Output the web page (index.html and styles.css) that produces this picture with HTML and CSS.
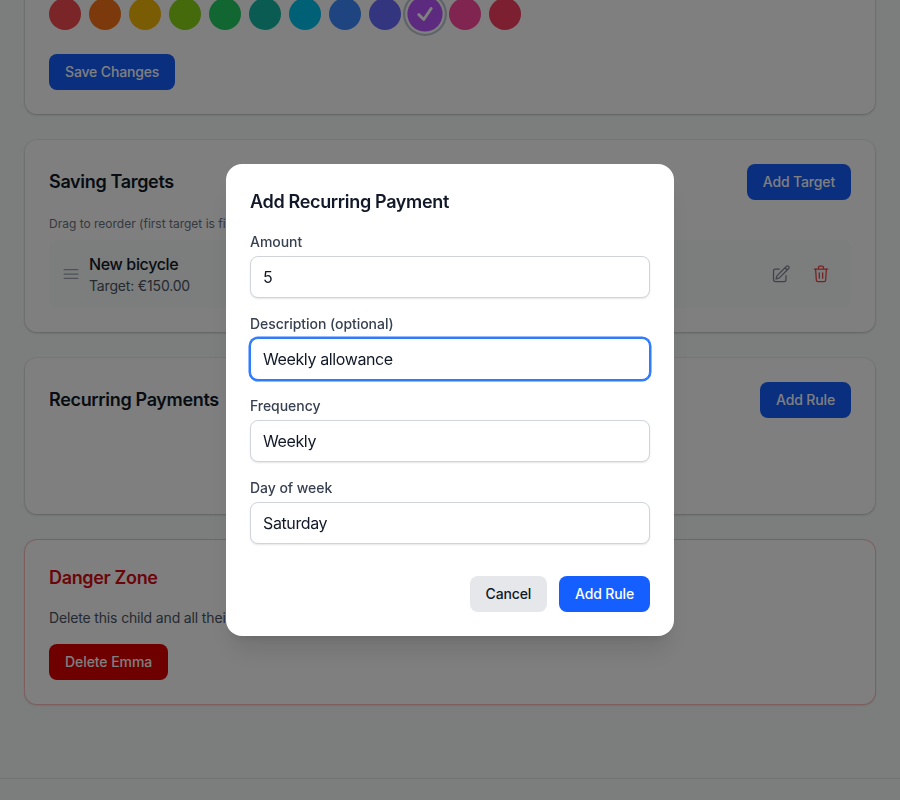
FILE: index.html
```html
<!DOCTYPE html>
<html lang="en">
<head>
<meta charset="utf-8">
<title>Edit child</title>
<link rel="stylesheet" href="styles.css">
</head>
<body>
<main class="content">
  <section class="card">
    <div class="swatches">
      <span class="swatch c-red"></span>
      <span class="swatch c-orange"></span>
      <span class="swatch c-yellow"></span>
      <span class="swatch c-lime"></span>
      <span class="swatch c-green"></span>
      <span class="swatch c-teal"></span>
      <span class="swatch c-cyan"></span>
      <span class="swatch c-blue"></span>
      <span class="swatch c-indigo"></span>
      <span class="swatch c-purple selected">
        <svg class="check" viewBox="0 0 24 24" fill="none" stroke="currentColor" stroke-width="3.500" stroke-linecap="round" stroke-linejoin="round"><path d="M4.500 12.750l6 6 9-13.500"/></svg>
      </span>
      <span class="swatch c-pink"></span>
      <span class="swatch c-rose"></span>
    </div>
    <button class="btn primary" type="button">Save Changes</button>
  </section>

  <section class="card">
    <div class="card-head">
      <h2>Saving Targets</h2>
      <button class="btn primary" type="button">Add Target</button>
    </div>
    <p class="hint">Drag to reorder (first target is filled first)</p>
    <div class="target">
      <svg class="icon handle" viewBox="0 0 24 24" fill="none" stroke="currentColor" stroke-width="1.5" stroke-linecap="round"><path d="M3.75 6.75h16.5M3.75 12h16.5M3.75 17.25h16.5"/></svg>
      <div class="target-info">
        <div class="target-name">New bicycle</div>
        <div class="target-amount">Target: €150.00</div>
      </div>
      <div class="target-actions">
        <svg class="icon edit" viewBox="0 0 24 24" fill="none" stroke="currentColor" stroke-width="1.5" stroke-linecap="round" stroke-linejoin="round"><path d="M16.862 4.487l1.687-1.688a1.875 1.875 0 112.652 2.652L10.582 16.07a4.5 4.5 0 01-1.897 1.13L6 18l.8-2.685a4.5 4.5 0 011.13-1.897l8.932-8.931zm0 0L19.5 7.125M18 14v4.75A2.25 2.25 0 0115.75 21H5.25A2.25 2.25 0 013 18.75V8.25A2.25 2.25 0 015.25 6H10"/></svg>
        <svg class="icon trash" viewBox="0 0 24 24" fill="none" stroke="currentColor" stroke-width="1.5" stroke-linecap="round" stroke-linejoin="round"><path d="M4 6h16M9 6V4.200A1.700 1.700 0 0 1 10.700 2.500h2.600A1.700 1.700 0 0 1 15 4.200V6M5.500 6l.9 13.300a2 2 0 0 0 2 1.900h7.200a2 2 0 0 0 2-1.900L18.500 6M10 10.500v6.500M14 10.500v6.500"/></svg>
      </div>
    </div>
  </section>

  <section class="card card-empty">
    <div class="card-head">
      <h2>Recurring Payments</h2>
      <button class="btn primary" type="button">Add Rule</button>
    </div>
  </section>

  <section class="card danger">
    <h2>Danger Zone</h2>
    <p class="danger-text">Delete this child and all their data. This cannot be undone.</p>
    <button class="btn destructive" type="button">Delete Emma</button>
  </section>
</main>
<footer class="footer"></footer>

<div class="overlay">
  <form class="modal">
    <h3>Add Recurring Payment</h3>
    <div class="fields">
      <label class="field">
        <span>Amount</span>
        <input type="text" value="5">
      </label>
      <label class="field">
        <span>Description (optional)</span>
        <input class="focused" type="text" value="Weekly allowance">
      </label>
      <label class="field">
        <span>Frequency</span>
        <input type="text" value="Weekly">
      </label>
      <label class="field">
        <span>Day of week</span>
        <input type="text" value="Saturday">
      </label>
    </div>
    <div class="modal-actions">
      <button class="btn secondary" type="button">Cancel</button>
      <button class="btn bright" type="button">Add Rule</button>
    </div>
  </form>
</div>
</body>
</html>
```

FILE: styles.css
```css
* {
  box-sizing: border-box;
}

html,
body {
  height: 100%;
}

body {
  margin: 0;
  overflow: hidden;
  background: #f9fcfc;
  color: #111827;
  font-family: Inter, "Liberation Sans", sans-serif;
  display: flex;
  flex-direction: column;
}

.content {
  flex: 1;
  width: 850px;
  margin: -26px auto 0;
  display: flex;
  flex-direction: column;
  gap: 26px;
}

.card {
  background: #fff;
  border-radius: 12px;
  padding: 24px;
  box-shadow: 0 0 0 1px rgba(0, 0, 0, 0.04), 0 1px 3px rgba(0, 0, 0, 0.2);
}

.card-empty {
  padding-bottom: 96px;
}

.card-head {
  display: flex;
  align-items: center;
  justify-content: space-between;
}

h2 {
  margin: 0;
  font-size: 18px;
  line-height: 28px;
  font-weight: 600;
  letter-spacing: -0.33px;
}

.swatches {
  display: flex;
  gap: 8px;
  margin-bottom: 24px;
}

.swatch {
  width: 32px;
  height: 32px;
  border-radius: 50%;
  display: flex;
  align-items: center;
  justify-content: center;
  color: #fff;
}

.swatch.selected {
  transform: scale(1.1);
  box-shadow: 0 0 0 2px #fff, 0 0 0 4px #bfc9d4;
}

.check {
  width: 18px;
  height: 18px;
}

.c-red { background: #f44a50; }
.c-orange { background: #f97316; }
.c-yellow { background: #f4b80a; }
.c-lime { background: #88d418; }
.c-green { background: #24cc64; }
.c-teal { background: #14b8a6; }
.c-cyan { background: #00c0ea; }
.c-blue { background: #3c8aff; }
.c-indigo { background: #666cfe; }
.c-purple { background: #b854ff; }
.c-pink { background: #ff4aa0; }
.c-rose { background: #f83e60; }

.btn {
  height: 36px;
  padding: 0 16px 2px;
  border: 0;
  border-radius: 8px;
  font-family: inherit;
  font-size: 14px;
  font-weight: 500;
  letter-spacing: -0.15px;
  display: inline-block;
}

.primary,
.bright {
  background: #155eff;
  color: #fff;
}

.secondary {
  background: #e5e7eb;
  color: #111827;
}

.destructive {
  background: #dc0000;
  color: #fff;
  letter-spacing: -0.07px;
}

.hint {
  margin: 16px 0 8px;
  font-size: 12px;
  line-height: 16px;
  color: #6b7280;
}

.target {
  display: flex;
  align-items: center;
  gap: 8px;
  padding: 12px;
  background: #f9fafb;
  border-radius: 8px;
}

.icon {
  width: 20px;
  height: 20px;
  flex: none;
}

.handle {
  color: #9ca3af;
}

.target-info {
  flex: 1;
}

.target-name {
  font-size: 16px;
  line-height: 24px;
  font-weight: 500;
  letter-spacing: -0.35px;
}

.target-amount {
  font-size: 14px;
  line-height: 20px;
  letter-spacing: -0.17px;
  color: #4b5563;
}

.target-actions {
  display: flex;
  gap: 20px;
  padding-right: 8px;
}

.edit {
  color: #7f8793;
}

.trash {
  color: #ef4444;
}

.danger {
  box-shadow: 0 0 0 1px #fcbcbc, 0 1px 3px rgba(0, 0, 0, 0.2);
}

.danger h2 {
  color: #d40a14;
}

.danger-text {
  margin: 16px 0;
  font-size: 14px;
  line-height: 20px;
  letter-spacing: -0.15px;
  color: #4b5563;
}

.footer {
  height: 22px;
  flex: none;
  border-top: 1px solid #e5e7eb;
}

.overlay {
  position: fixed;
  inset: 0;
  background: rgba(0, 0, 0, 0.5);
  display: flex;
  align-items: center;
  justify-content: center;
}

.modal {
  width: 448px;
  padding: 24px;
  background: #fff;
  border-radius: 16px;
  box-shadow: 0 20px 25px -5px rgba(0, 0, 0, 0.1), 0 8px 10px -6px rgba(0, 0, 0, 0.1);
}

h3 {
  margin: 0 0 16px;
  font-size: 18px;
  line-height: 28px;
  font-weight: 600;
  letter-spacing: -0.33px;
}

.fields {
  display: flex;
  flex-direction: column;
  gap: 16px;
}

.field {
  display: flex;
  flex-direction: column;
  gap: 4px;
}

.field span {
  font-size: 14px;
  line-height: 20px;
  font-weight: 500;
  letter-spacing: -0.05px;
  color: #374151;
}

.field input {
  width: 100%;
  height: 42px;
  padding: 0 12px;
  background: #fff;
  border: 1px solid #d1d5db;
  border-radius: 8px;
  box-shadow: 0 1px 2px rgba(0, 0, 0, 0.1);
  color: #111827;
  font-family: inherit;
  font-size: 16px;
  letter-spacing: -0.38px;
  outline: none;
}

.field input.focused {
  border-color: #2f7bff;
  box-shadow: 0 0 0 1.5px #2f7bff;
}

.modal-actions {
  display: flex;
  justify-content: flex-end;
  gap: 12px;
  margin-top: 32px;
}
```
